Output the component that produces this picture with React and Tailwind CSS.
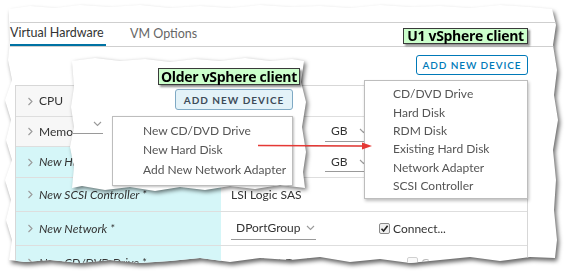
import React from 'react';

const paperShape =
  '[clip-path:polygon(9px_9px,30px_6px,55px_8px,80px_5px,110px_7px,140px_5px,170px_8px,200px_6px,230px_8px,260px_5px,290px_7px,320px_6px,350px_8px,380px_5px,410px_7px,440px_6px,470px_8px,500px_5px,530px_7px,552px_9px,556px_25px,553px_45px,557px_70px,554px_95px,558px_120px,553px_150px,556px_180px,554px_210px,557px_240px,555px_258px,530px_257px,500px_261px,470px_257px,440px_260px,410px_263px,380px_259px,350px_262px,320px_257px,290px_260px,260px_258px,230px_262px,200px_258px,170px_261px,140px_263px,110px_260px,80px_263px,50px_260px,25px_262px,9px_260px,12px_240px,6px_220px,11px_200px,5px_180px,12px_160px,6px_140px,11px_120px,5px_100px,12px_80px,8px_60px,10px_40px,9px_20px)]';

const overlayShape =
  '[clip-path:polygon(2px_4px,25px_1px,50px_4px,75px_2px,100px_5px,125px_2px,150px_4px,175px_1px,200px_4px,222px_2px,234px_4px,231px_25px,236px_45px,232px_70px,236px_95px,233px_115px,235px_131px,210px_128px,185px_132px,160px_129px,135px_133px,110px_130px,85px_134px,60px_130px,35px_133px,12px_129px,2px_131px,4px_110px,0px_90px,4px_70px,1px_50px,4px_30px)]';

const Chevron = ({ className = '' }) => (
  <svg width="7" height="9" viewBox="0 0 7 9" className={className}>
    <path d="M1.5 1 L5 4.5 L1.5 8" fill="none" stroke="#9a9a9a" strokeWidth="1.1" />
  </svg>
);

const Down = () => (
  <svg width="9" height="6" viewBox="0 0 9 6">
    <path d="M1 1 L4.5 4.5 L8 1" fill="none" stroke="#9a9a9a" strokeWidth="1.1" />
  </svg>
);

const CheckBox = ({ checked, muted }) => (
  <span
    className={
      'inline-flex items-center justify-center w-[11px] h-[11px] rounded-[2px] border ' +
      (muted ? 'border-[#d0d0d0] bg-[#fafafa]' : 'border-[#8a8a8a] bg-[#f0f0f0]')
    }
  >
    {checked && (
      <svg width="9" height="9" viewBox="0 0 9 9">
        <path d="M1.5 4.8 L3.6 7 L7.6 1.8" fill="none" stroke="#222" strokeWidth="1.6" />
      </svg>
    )}
  </span>
);

const UnitSelect = () => (
  <div className="w-[45px] h-[20px] border-b border-[#9a9a9a] flex items-center justify-between pl-[6px] pr-[2px]">
    <span>GB</span>
    <Down />
  </div>
);

const rows = [
  { label: 'CPU', fresh: false, height: 'h-[31px]', right: null },
  { label: 'Memory', fresh: false, height: 'h-[30px]', right: <div className="pl-[104px]"><UnitSelect /></div> },
  { label: 'New Hard disk *', fresh: true, height: 'h-[31px]', right: <div className="pl-[104px]"><UnitSelect /></div> },
  { label: 'New SCSI Controller *', fresh: true, height: 'h-[34px]', right: <div className="pl-[10px]">LSI Logic SAS</div> },
  {
    label: 'New Network *',
    fresh: true,
    height: 'h-[34px]',
    right: (
      <div className="pl-[10px] flex items-center">
        <div className="w-[85px] h-[22px] border-b border-[#9a9a9a] flex items-center gap-[5px] pl-[5px]">
          <span>DPortGroup</span>
          <Down />
        </div>
        <div className="ml-[63px] flex items-center gap-[3px]">
          <CheckBox checked />
          <span>Connect...</span>
        </div>
      </div>
    ),
  },
  {
    label: 'New CD/DVD Drive *',
    fresh: true,
    height: 'h-[34px]',
    right: (
      <div className="pl-[30px] flex items-center">
        <span className="text-[#555]">Client Device</span>
        <div className="ml-[86px] flex items-center gap-[3px] text-[#b8b8b8]">
          <CheckBox muted />
          <span>Connect</span>
        </div>
      </div>
    ),
  },
];

const Label = ({ children, className = '' }) => (
  <div
    className={
      'absolute bg-[#ccffcc] border border-[#3a3a3a] shadow-[2px_2px_2px_rgba(0,0,0,0.45)] flex items-center justify-center text-[14px] leading-none font-bold text-black font-["Open_Sans",sans-serif] tracking-[-0.3px] whitespace-nowrap ' +
      className
    }
  >
    {children}
  </div>
);

export default function App() {
  return (
    <div className="relative w-[567px] h-[275px] bg-white overflow-hidden font-['Lato',sans-serif] text-[12px] text-[#333]">
      {/* main page, torn out */}
      <div className="drop-shadow-[2px_3px_2px_rgba(0,0,0,0.6)]">
        <div className={'w-[567px] h-[275px] bg-white pt-[22px] pl-[10px] ' + paperShape}>
          <div className="h-[25px] border-t border-b border-[#cfcfcf] flex items-start gap-[24px] text-[12.5px] whitespace-nowrap">
            <div className="w-[96px] h-[23px] border-b-2 border-[#0072a3] flex items-center text-[#333]">Virtual Hardware</div>
            <div className="h-[23px] flex items-center text-[#666]">VM Options</div>
          </div>

          <div className="w-[518px] flex justify-end mt-[8px]">
            <button className="w-[112px] h-[20px] border border-[#0079b8] rounded-[3px] text-[#0079b8] text-[10px] font-semibold tracking-[0.09em] leading-none">
              ADD NEW DEVICE
            </button>
          </div>

          <div className="ml-[5px] mt-[10px] w-[513px] border-t border-l border-r border-[#d7d7d7]">
            {rows.map((r) => (
              <div key={r.label} className={'flex border-b border-[#dedede] ' + r.height}>
                <div
                  className={
                    'w-[205px] flex items-center gap-[5px] pl-[11px] ' +
                    (r.fresh ? 'bg-[#d5f6f8] italic' : 'bg-[#f7f7f7]')
                  }
                >
                  <Chevron />
                  <span>{r.label}</span>
                </div>
                <div className="flex-1 flex items-center">{r.right}</div>
              </div>
            ))}
          </div>
        </div>
      </div>

      {/* older client piece */}
      <div className="absolute left-[70px] top-[57px] drop-shadow-[2px_2px_2px_rgba(0,0,0,0.55)]">
        <div className={'relative w-[238px] h-[135px] bg-white ' + overlayShape}>
          <div className="absolute left-0 top-[76px] w-[33px] border-b border-[#9a9a9a]" />
          <div className="absolute left-[23px] top-[64px]"><Down /></div>
          <button className="absolute left-[105px] top-[32px] w-[118px] h-[21px] bg-[#e3f2f8] border border-[#7fa9c4] rounded-[3px] text-[#3d4b58] text-[10px] font-bold tracking-[0.1em] leading-none">
            ADD NEW DEVICE
          </button>
          <div className="absolute left-[42px] top-[59px] w-[181px] h-[70px] bg-white border border-[#bdbdbd] shadow-[1px_1px_2px_rgba(0,0,0,0.25)] pt-[4px] pl-[30px] text-[#555]">
            <div className="h-[19.5px] flex items-center">New CD/DVD Drive</div>
            <div className="h-[19.5px] flex items-center">New Hard Disk</div>
            <div className="h-[19.5px] flex items-center">Add New Network Adapter</div>
          </div>
        </div>
      </div>

      {/* new client menu */}
      <div className="absolute left-[364px] top-[80px] w-[164px] h-[119px] bg-white border border-[#bdbdbd] shadow-[1px_2px_3px_rgba(0,0,0,0.25)] pt-[4px] pl-[28px] text-[#555]">
        {['CD/DVD Drive', 'Hard Disk', 'RDM Disk', 'Existing Hard Disk', 'Network Adapter', 'SCSI Controller'].map((t) => (
          <div key={t} className="h-[18.4px] flex items-center">{t}</div>
        ))}
      </div>

      <Label className="left-[158px] top-[68px] w-[142px] h-[17px]">Older vSphere client</Label>
      <Label className="left-[403px] top-[28px] w-[125px] h-[16px]">U1 vSphere client</Label>

      <svg className="absolute left-[256px] top-[140px]" width="120" height="12" viewBox="0 0 120 12">
        <line x1="2" y1="5.5" x2="108" y2="6" stroke="#e53935" strokeWidth="1.6" />
        <path d="M106 2.5 L116 6 L106 9.5 Z" fill="#e53935" />
      </svg>
    </div>
  );
}
